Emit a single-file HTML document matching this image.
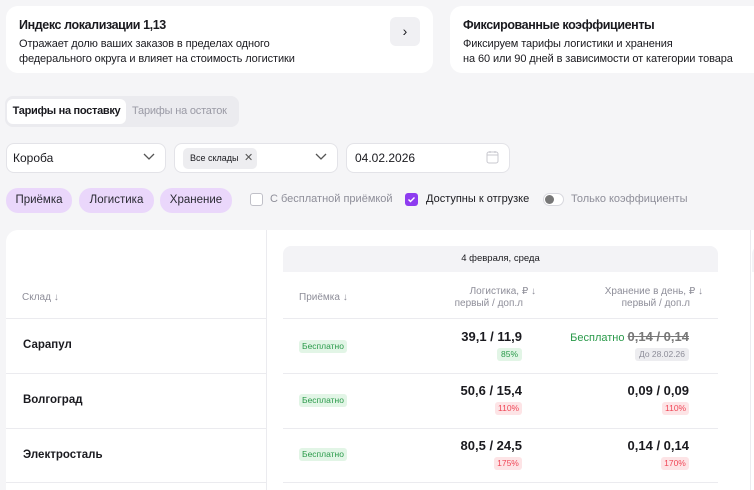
<!DOCTYPE html>
<html><head><meta charset="utf-8"><style>
*{box-sizing:border-box;margin:0;padding:0}
body{width:754px;height:487px;overflow:hidden;background:#f5f5f7;font-family:"Liberation Sans","DejaVu Sans",sans-serif;color:#1a1a1f;position:relative}
.a{position:absolute}
.card{background:#fff;border-radius:12px}
.t1{font-size:12.5px;font-weight:bold;letter-spacing:-0.4px}
.t2{font-size:11px;line-height:15px;letter-spacing:-0.1px}
.sel{background:#fff;border:1px solid #e3e3e8;border-radius:8px;height:30px}
.pill{background:#ead7fb;border-radius:12px;height:25px;font-size:11.5px;line-height:25px;text-align:center;color:#2a2a33}
.hd{font-size:10px;color:#8e8e99}
.g{color:#8e8e99}
.badge{font-size:8.5px;border-radius:3px;height:13px;line-height:13px;padding:0 3px;text-align:center}
.gr{background:#e2f5e6;color:#2a9a4a}
.rd{background:#fde4e6;color:#f04858}
.gy{background:#ededf0;color:#8e8e99}
.num{font-size:13px;font-weight:bold;text-align:right}
.line{height:1px;background:#ebebef}
.name{font-size:11.5px;font-weight:bold}
</style></head><body>
<div class="a card" style="left:6px;top:6px;width:427px;height:67px"></div>
<div class="a t1" style="left:19px;top:18px">Индекс локализации 1,13</div>
<div class="a t2" style="left:19px;top:37px">Отражает долю ваших заказов в пределах одного<br>федерального округа и влияет на стоимость логистики</div>
<div class="a" style="left:390px;top:17px;width:30px;height:29px;background:#f0f0f3;border-radius:6px;text-align:center;line-height:29px;font-size:14px">›</div>
<div class="a card" style="left:450px;top:6px;width:320px;height:67px"></div>
<div class="a t1" style="left:463px;top:18px">Фиксированные коэффициенты</div>
<div class="a t2" style="left:463px;top:37px">Фиксируем тарифы логистики и хранения<br>на 60 или 90 дней в зависимости от категории товара</div>

<div class="a" style="left:5px;top:96px;width:234px;height:31px;background:#ebebef;border-radius:8px"></div>
<div class="a" style="left:7px;top:99px;width:119px;height:25px;background:#fff;border-radius:6px;font-size:11px;font-weight:bold;letter-spacing:-0.3px;line-height:25px;text-align:center">Тарифы на поставку</div>
<div class="a" style="left:132px;top:99px;font-size:11px;letter-spacing:-0.2px;line-height:25px;color:#9a9aa5">Тарифы на остаток</div>

<div class="a sel" style="left:6px;top:143px;width:160px"></div>
<div class="a" style="left:13px;top:151px;font-size:12px">Короба</div>
<svg class="a" style="left:143px;top:153px" width="12" height="8"><path d="M1 1l5 5 5-5" stroke="#555" stroke-width="1.3" fill="none"/></svg>
<div class="a sel" style="left:174px;top:143px;width:164px"></div>
<div class="a" style="left:183px;top:148px;width:74px;height:21px;background:#ededf0;border-radius:5px;font-size:9px;line-height:21px;padding-left:7px">Все склады <span style="font-size:11px;margin-left:3px;color:#555">✕</span></div>
<svg class="a" style="left:315px;top:153px" width="12" height="8"><path d="M1 1l5 5 5-5" stroke="#555" stroke-width="1.3" fill="none"/></svg>
<div class="a sel" style="left:346px;top:143px;width:164px"></div>
<div class="a" style="left:355px;top:151px;font-size:12px">04.02.2026</div>
<svg class="a" style="left:486px;top:150px" width="13" height="14"><rect x="1" y="2" width="11" height="11" rx="2" stroke="#c8c8cf" fill="none"/><path d="M1 5h11M4 1v2M9 1v2" stroke="#c8c8cf"/></svg>

<div class="a pill" style="left:6px;top:188px;width:66px">Приёмка</div>
<div class="a pill" style="left:79px;top:188px;width:75px">Логистика</div>
<div class="a pill" style="left:160px;top:188px;width:72px">Хранение</div>
<div class="a" style="left:250px;top:193px;width:13px;height:13px;border:1.3px solid #c0c0c8;border-radius:3px;background:#fff"></div>
<div class="a g" style="left:270px;top:193px;font-size:11px">С бесплатной приёмкой</div>
<div class="a" style="left:405px;top:193px;width:13px;height:13px;border-radius:3px;background:#8e3cf0"><svg width="13" height="13"><path d="M3.5 6.5l2 2 4-4" stroke="#fff" stroke-width="1.4" fill="none"/></svg></div>
<div class="a" style="left:426px;top:193px;font-size:11px">Доступны к отгрузке</div>
<div class="a" style="left:543px;top:193px;width:21px;height:13px;border:1px solid #d8d8de;border-radius:7px;background:#fff"></div>
<div class="a" style="left:545px;top:195px;width:9px;height:9px;border-radius:50%;background:#777"></div>
<div class="a g" style="left:571px;top:193px;font-size:11px">Только коэффициенты</div>

<div class="a" style="left:6px;top:230px;width:760px;height:260px;background:#fff;border-top-left-radius:12px"></div>
<div class="a" style="left:266px;top:230px;width:1px;height:260px;background:#ebebef"></div>
<div class="a" style="left:750px;top:230px;width:1px;height:260px;background:#ebebef"></div>
<div class="a" style="left:283px;top:246px;width:435px;height:26px;background:#f3f3f6;border-radius:8px 8px 0 0;font-size:9.5px;text-align:center;line-height:26px">4 февраля, среда</div>
<div class="a" style="left:752px;top:246px;width:10px;height:26px;background:#f3f3f6;border-radius:8px 0 0 0"></div>

<div class="a hd" style="left:22px;top:292px">Склад ↓</div>
<div class="a hd" style="left:299px;top:292px">Приёмка ↓</div>
<div class="a hd" style="left:380px;top:286px;width:156px;text-align:right;line-height:12px">Логистика, ₽ ↓<br><span style="margin-right:13px">первый / доп.л</span></div>
<div class="a hd" style="left:540px;top:286px;width:163px;text-align:right;line-height:12px">Хранение в день, ₽ ↓<br><span style="margin-right:13px">первый / доп.л</span></div>

<div class="a line" style="left:6px;top:318px;width:260px"></div>
<div class="a line" style="left:283px;top:318px;width:435px"></div>
<div class="a line" style="left:6px;top:373px;width:260px"></div>
<div class="a line" style="left:283px;top:373px;width:435px"></div>
<div class="a line" style="left:6px;top:428px;width:260px"></div>
<div class="a line" style="left:283px;top:428px;width:435px"></div>
<div class="a line" style="left:6px;top:482px;width:260px"></div>
<div class="a line" style="left:283px;top:482px;width:435px"></div>

<div class="a name" style="left:23px;top:339px">Сарапул</div>
<div class="a name" style="left:23px;top:394px">Волгоград</div>
<div class="a name" style="left:23px;top:449px">Электросталь</div>

<div class="a badge gr" style="left:299px;top:340px;width:48px">Бесплатно</div>
<div class="a badge gr" style="left:299px;top:394px;width:48px">Бесплатно</div>
<div class="a badge gr" style="left:299px;top:448px;width:48px">Бесплатно</div>

<div class="a num" style="left:400px;top:329px;width:122px">39,1 / 11,9</div>
<div class="a badge gr" style="left:497px;top:348px;width:25px">85%</div>
<div class="a num" style="left:400px;top:383px;width:122px">50,6 / 15,4</div>
<div class="a badge rd" style="left:495px;top:402px;width:27px">110%</div>
<div class="a num" style="left:400px;top:438px;width:122px">80,5 / 24,5</div>
<div class="a badge rd" style="left:494px;top:457px;width:28px">175%</div>

<div class="a" style="left:540px;top:329px;width:149px;text-align:right;font-size:11px"><span style="color:#2a9a4a">Бесплатно</span> <span style="font-size:13px;font-weight:bold;color:#777;text-decoration:line-through">0,14 / 0,14</span></div>
<div class="a badge gy" style="left:635px;top:348px;width:54px">До 28.02.26</div>
<div class="a num" style="left:560px;top:383px;width:129px">0,09 / 0,09</div>
<div class="a badge rd" style="left:662px;top:402px;width:27px">110%</div>
<div class="a num" style="left:560px;top:438px;width:129px">0,14 / 0,14</div>
<div class="a badge rd" style="left:661px;top:457px;width:28px">170%</div>
</body></html>
